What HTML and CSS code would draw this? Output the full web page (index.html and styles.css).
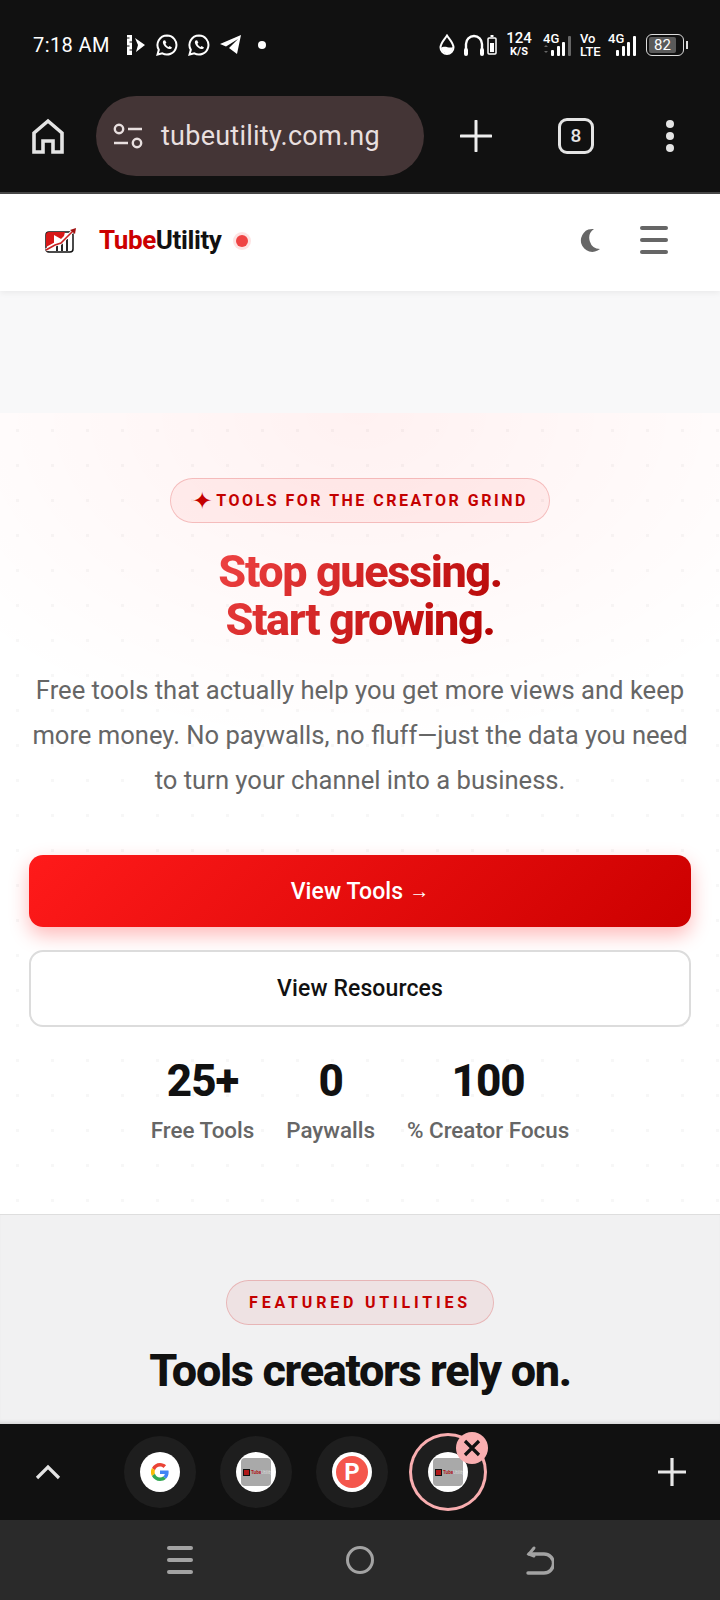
FILE: index.html
```html
<!DOCTYPE html>
<html>
<head>
    <title>TubeUtility</title>
    <link rel="stylesheet" href="styles.css">
</head>
<body>
    <div class="status-bar">
        <span class="clock">7:18 AM</span>
        <div class="status-icons">
            <svg width="20" height="22" viewBox="0 0 20 22"><path d="M1 1h5v20H1z" fill="#fff"/><path d="M1 4h2.500M3.500 8H6M1 12h2.500M3.500 16H6" stroke="#111" stroke-width="1.200"/><path d="M9 4l10 7-9 7 2-7z" fill="#fff"/></svg>
            <svg width="22" height="22" viewBox="0 0 22 22"><path d="M11 1.500a9.500 9.500 0 0 0-8.200 14.300L1.500 20.500l4.800-1.200A9.500 9.500 0 1 0 11 1.500z" fill="none" stroke="#fff" stroke-width="2"/><path d="M7.600 6.500c-1 1-1 2.600.2 4.400 1.300 2 3.200 3.600 5.200 4.100 1.400.3 2.600-.3 3-1.500l-2.400-1.500-1 1c-1.400-.6-2.600-1.800-3.200-3.200l1-1-1.300-2.500z" fill="#fff"/></svg>
            <svg width="22" height="22" viewBox="0 0 22 22"><path d="M11 1.500a9.500 9.500 0 0 0-8.200 14.300L1.500 20.500l4.800-1.200A9.500 9.500 0 1 0 11 1.500z" fill="none" stroke="#fff" stroke-width="2"/><path d="M7.600 6.500c-1 1-1 2.600.2 4.400 1.300 2 3.200 3.600 5.200 4.100 1.400.3 2.600-.3 3-1.500l-2.400-1.500-1 1c-1.400-.6-2.600-1.800-3.200-3.200l1-1-1.300-2.500z" fill="#fff"/></svg>
            <svg width="22" height="20" viewBox="0 0 22 20"><path d="M21 0L0 9l6 2.500L18 4 9 13l8 6z" fill="#fff"/></svg>
            <span class="notif-dot"></span>
        </div>
        <div class="status-right">
            <svg class="drop" width="16" height="22" viewBox="0 0 16 22"><path d="M8 1.500C5 6 1.500 9 1.500 13.500a6.500 6.500 0 0 0 13 0C14.500 9 11 6 8 1.500z" fill="none" stroke="#fff" stroke-width="2"/><path d="M2 14c4-3 8 1 12-1a6 6 0 0 1-12 1z" fill="#fff"/></svg>
            <svg class="headphones" width="22" height="24" viewBox="0 0 22 24"><path d="M3 16V11a8 8 0 0 1 16 0v5" fill="none" stroke="#fff" stroke-width="2.400"/><rect x="1" y="15" width="4" height="8" rx="2" fill="#fff"/><rect x="17" y="15" width="4" height="8" rx="2" fill="#fff"/></svg>
            <svg class="tiny-batt" width="10" height="20" viewBox="0 0 10 20"><path d="M3.500 0h3v2h-3z" fill="#fff"/><rect x="1" y="3" width="8" height="16" rx="1" fill="none" stroke="#fff" stroke-width="1.500"/><rect x="3" y="8" width="4" height="9" fill="#fff"/></svg>
            <div class="speed"><span>124</span><span class="speed-unit">K/S</span></div>
            <div class="sim">
                <span class="sim-label">4G</span>
                <svg width="29" height="20" viewBox="0 0 29 20"><path d="M1 11l2-2 2 2zM1 15l2 2 2-2z" fill="#666"/><rect x="8" y="14" width="3" height="6" rx="1" fill="#fff"/><rect x="14" y="10" width="3" height="10" rx="1" fill="#fff"/><rect x="19" y="6" width="3" height="14" rx="1" fill="#fff"/><rect x="25" y="0" width="3" height="20" rx="1" fill="#666"/></svg>
            </div>
            <div class="volte"><span>Vo</span><span>LTE</span></div>
            <div class="sim">
                <span class="sim-label">4G</span>
                <svg width="22" height="20" viewBox="0 0 22 20"><rect x="1" y="14" width="3" height="6" rx="1" fill="#fff"/><rect x="7" y="10" width="3" height="10" rx="1" fill="#fff"/><rect x="12" y="6" width="3" height="14" rx="1" fill="#fff"/><rect x="18" y="0" width="3" height="20" rx="1" fill="#fff"/></svg>
            </div>
            <div class="battery"><span class="battery-fill">82</span></div>
            <span class="battery-tip"></span>
        </div>
    </div>

    <div class="toolbar">
        <svg width="32" height="36" viewBox="0 0 32 36"><path d="M2 34V15L16 3l14 12v19h-9V23h-10v11z" fill="none" stroke="#e4e4e4" stroke-width="3.600"/></svg>
        <div class="url-pill">
            <svg width="30" height="26" viewBox="0 0 30 26"><circle cx="6" cy="6" r="4.200" fill="none" stroke="#e8dfdf" stroke-width="2.400"/><path d="M15 6h14M1 20h14" stroke="#e8dfdf" stroke-width="2.400"/><circle cx="24" cy="20" r="4.200" fill="none" stroke="#e8dfdf" stroke-width="2.400"/></svg>
            <span class="url-text">tubeutility.com.ng</span>
        </div>
        <svg class="tb-plus" width="32" height="32" viewBox="0 0 32 32"><path d="M16 1v30M1 16h30" stroke="#eee" stroke-width="3" stroke-linecap="round"/></svg>
        <div class="tab-count">8</div>
        <div class="menu-dots"><span></span><span></span><span></span></div>
    </div>

    <div class="site-header">
        <svg class="logo" width="32" height="26" viewBox="0 0 32 26"><rect x="1" y="5" width="27" height="20" rx="3" fill="#fff" stroke="#111" stroke-width="1.500"/><path d="M4 5h16l-1 4-3 3-15 8V8a3 3 0 0 1 3-3z" fill="#d81818"/><path d="M9 8l8 4.500-8 4.500z" fill="#fff"/><path d="M12 24v-6M17 24v-9M22 24V12" stroke="#111" stroke-width="1.800"/><path d="M1 23l9-5 6-2 5-5 8-8" fill="none" stroke="#fff" stroke-width="3.200"/><path d="M1 23l9-5 6-2 5-5 8-8" fill="none" stroke="#c82020" stroke-width="1.600"/><path d="M25 3l6-2-1 6z" fill="#a01010"/></svg>
        <div class="brand"><span class="brand-red">Tube</span>Utility</div>
        <span class="live-dot"></span>
        <svg class="moon" width="20" height="24" viewBox="0 0 20 24"><path d="M14 1a11.500 11.500 0 1 0 6 20A11 11 0 0 1 14 1z" fill="#666"/></svg>
        <div class="burger"><span></span><span></span><span></span></div>
    </div>

    <div class="ad-gap"></div>

    <section class="hero">
        <div class="badge badge-hero"><span class="spark">✦</span> TOOLS FOR THE CREATOR GRIND</div>
        <h1 class="headline"><span class="gradient-text">Stop guessing.<br>Start growing.</span></h1>
        <p class="lead">Free tools that actually help you get more views and keep more money. No paywalls, no fluff—just the data you need to turn your channel into a business.</p>
        <a class="btn btn-primary">View Tools <span class="arrow">→</span></a>
        <a class="btn btn-outline">View Resources</a>
        <div class="stats">
            <div class="stat"><div class="stat-num">25+</div><div class="stat-label">Free Tools</div></div>
            <div class="stat"><div class="stat-num">0</div><div class="stat-label">Paywalls</div></div>
            <div class="stat"><div class="stat-num">100</div><div class="stat-label">% Creator Focus</div></div>
        </div>
    </section>

    <section class="featured">
        <div class="badge badge-featured">FEATURED UTILITIES</div>
        <h2 class="section-title">Tools creators rely on.</h2>
    </section>

    <div class="tab-strip">
        <svg class="chevron" width="26" height="16" viewBox="0 0 26 16"><path d="M2 14L13 3l11 11" fill="none" stroke="#e4e4e4" stroke-width="3.200"/></svg>
        <div class="chips">
            <div class="chip"><div class="chip-inner">
                <svg width="18" height="18" viewBox="0 0 48 48"><path fill="#ea4335" d="M24 9.500c3.500 0 6.700 1.200 9.200 3.600l6.900-6.900C35.900 2.400 30.500 0 24 0 14.600 0 6.500 5.400 2.600 13.200l8 6.200C12.400 13.700 17.700 9.500 24 9.500z"/><path fill="#4285f4" d="M47 24.500c0-1.600-.1-3.100-.4-4.500H24v9h12.900c-.6 3-2.200 5.400-4.700 7.100l7.700 6C44.400 37.900 47 31.700 47 24.500z"/><path fill="#fbbc05" d="M10.500 28.600a14.500 14.500 0 0 1 0-9.200l-8-6.200a24 24 0 0 0 0 21.600z"/><path fill="#34a853" d="M24 48c6.500 0 11.900-2.100 15.900-5.900l-7.700-6c-2.200 1.500-4.900 2.300-8.200 2.300-6.300 0-11.600-4.200-13.500-9.900l-8 6.200C6.500 42.600 14.600 48 24 48z"/></svg>
            </div></div>
            <div class="chip"><div class="chip-inner"><div class="fav-tile"><i class="fav-mark"></i><span class="fav-text"><b>Tube</b>Utility</span></div></div></div>
            <div class="chip"><div class="chip-inner"><div class="fav-p">P</div></div></div>
            <div class="chip chip-active">
                <div class="chip-inner"><div class="fav-tile"><i class="fav-mark"></i><span class="fav-text"><b>Tube</b>Utility</span></div></div>
                <div class="chip-close"><svg width="18" height="18" viewBox="0 0 18 18"><path d="M2 2l14 14M16 2L2 16" stroke="#111" stroke-width="3.200"/></svg></div>
            </div>
        </div>
        <svg class="strip-plus" width="28" height="28" viewBox="0 0 28 28"><path d="M14 0v28M0 14h28" stroke="#e8e8e8" stroke-width="3.200"/></svg>
    </div>

    <div class="nav-bar">
        <div class="nav-menu"><span></span><span></span><span></span></div>
        <span class="nav-home"></span>
        <svg width="28" height="30" viewBox="0 0 28 30"><path d="M2 28h16a8 8 0 0 0 0-19H3" fill="none" stroke="#a3a3a3" stroke-width="3.400" stroke-linecap="round"/><path d="M8 3L3 9l5 2" fill="none" stroke="#a3a3a3" stroke-width="3" stroke-linecap="round"/></svg>
    </div>
</body>
</html>
```
FILE: styles.css
```css
* {
    box-sizing: border-box;
}
html, body {
    margin: 0;
    padding: 0;
}
body {
    width: 720px;
    height: 1600px;
    overflow: hidden;
    display: flex;
    flex-direction: column;
    font-family: Roboto, "Noto Sans", sans-serif;
    background: #111;
}

/* phone status bar */
.status-bar {
    height: 88px;
    flex: none;
    background: #111;
    color: #fff;
    display: flex;
    align-items: center;
    padding: 2px 32px 0 33px;
}
.clock {
    font-size: 20px;
    letter-spacing: 0.4px;
    width: 93px;
}
.status-icons {
    display: flex;
    align-items: center;
    gap: 10px;
}
.notif-dot {
    width: 8px;
    height: 8px;
    border-radius: 50%;
    background: #fff;
    margin-left: 6px;
}
.status-right {
    margin-left: auto;
    display: flex;
    align-items: center;
}
.headphones {
    margin-left: 8px;
}
.tiny-batt {
    margin-left: 2px;
}
.speed {
    width: 24px;
    display: flex;
    flex-direction: column;
    align-items: center;
    font-size: 15px;
    font-weight: 500;
    line-height: 13px;
    margin: 0 12px 0 10px;
}
.speed-unit {
    font-size: 11px;
    font-weight: 700;
}
.sim {
    position: relative;
    height: 22px;
    width: 29px;
}
.sim svg {
    position: absolute;
    right: 0;
    bottom: 0;
}
.sim-label {
    position: absolute;
    left: 0;
    top: -3px;
    font-size: 13px;
    font-weight: 500;
}
.volte {
    width: 20px;
    display: flex;
    flex-direction: column;
    font-size: 13px;
    font-weight: 500;
    line-height: 13px;
    margin: 0 8px;
}
.battery {
    width: 38px;
    height: 22px;
    margin-left: 9px;
    border: 1.5px solid #ddd;
    border-radius: 6px;
    padding: 2px;
    display: flex;
}
.battery-fill {
    width: 27px;
    background: #5a5a5a;
    border-radius: 2px;
    font-size: 15px;
    line-height: 16px;
    text-align: center;
}
.battery-tip {
    width: 2px;
    height: 8px;
    background: #ddd;
    margin-left: 2px;
}

/* browser toolbar */
.toolbar {
    height: 106px;
    flex: none;
    background: #111;
    border-bottom: 2px solid #484848;
    display: flex;
    align-items: center;
    padding: 0 0 8px 32px;
}
.url-pill {
    width: 328px;
    height: 80px;
    margin-left: 32px;
    border-radius: 40px;
    background: #443536;
    display: flex;
    align-items: center;
    padding-left: 17px;
}
.url-text {
    margin-left: 18px;
    color: #e8dfdf;
    font-size: 27px;
    letter-spacing: 0.25px;
}
.tb-plus {
    margin-left: 36px;
}
.tab-count {
    width: 36px;
    height: 36px;
    margin-left: 66px;
    border: 3px solid #e4e4e4;
    border-radius: 9px;
    color: #e4e4e4;
    font-size: 19px;
    font-weight: 500;
    line-height: 30px;
    text-align: center;
}
.menu-dots {
    margin-left: 72px;
    display: flex;
    flex-direction: column;
    gap: 4px;
}
.menu-dots span {
    width: 8px;
    height: 8px;
    border-radius: 50%;
    background: #e4e4e4;
}

/* site header */
.site-header {
    height: 97px;
    flex: none;
    background: #fff;
    display: flex;
    align-items: center;
    padding: 0 52px 5px 45px;
    box-shadow: 0 2px 6px rgba(0, 0, 0, 0.06);
    position: relative;
}
.brand {
    margin-left: 22px;
    font-size: 26px;
    font-weight: 700;
    letter-spacing: -0.4px;
    color: #111;
}
.brand-red {
    color: #cc0000;
}
.live-dot {
    width: 12px;
    height: 12px;
    margin: 2px 0 0 15px;
    border-radius: 50%;
    background: #ef4444;
    box-shadow: 0 0 0 3px rgba(239, 68, 68, 0.15);
}
.moon {
    margin-left: auto;
}
.burger {
    margin-left: 40px;
    display: flex;
    flex-direction: column;
    gap: 8px;
}
.burger span {
    width: 28px;
    height: 4px;
    border-radius: 2px;
    background: #666;
}

.ad-gap {
    height: 122px;
    flex: none;
    background: #f8f8f9;
}

/* hero */
.hero {
    height: 802px;
    flex: none;
    padding: 65px 29px 0;
    display: flex;
    flex-direction: column;
    align-items: center;
    background-color: #fff;
    background-image:
        radial-gradient(circle, rgba(0, 0, 0, 0.03) 1.5px, transparent 2px),
        radial-gradient(ellipse 70% 42% at 50% 0, rgba(255, 0, 0, 0.055), rgba(255, 0, 0, 0));
    background-size: 35px 35px, 100% 100%;
    border-bottom: 1px solid #dedede;
}
.badge {
    height: 45px;
    flex: none;
    border-radius: 23px;
    display: flex;
    align-items: center;
    justify-content: center;
    color: #c40000;
    font-size: 16px;
    font-weight: 700;
    border: 1px solid rgba(204, 0, 0, 0.2);
}
.badge-hero {
    width: 380px;
    letter-spacing: 2.5px;
    background: rgba(255, 0, 0, 0.05);
}
.spark {
    font-family: "DejaVu Sans", sans-serif;
    font-size: 24px;
    line-height: 24px;
    letter-spacing: 0;
    margin-right: 4px;
}
.headline {
    margin: 25px 0 0;
    font-size: 45px;
    font-weight: 800;
    line-height: 48px;
    letter-spacing: -1.4px;
    text-align: center;
}
.gradient-text {
    display: inline-block;
    background: linear-gradient(135deg, #ef4444, #b00000);
    -webkit-background-clip: text;
    background-clip: text;
    color: transparent;
}
.lead {
    margin: 24px 0 0;
    width: 662px;
    color: #666;
    font-size: 25.6px;
    line-height: 45px;
    text-align: center;
}
.btn {
    align-self: stretch;
    flex: none;
    display: flex;
    align-items: center;
    justify-content: center;
    border-radius: 14px;
    font-size: 23px;
    font-weight: 500;
    letter-spacing: 0.1px;
}
.btn-primary {
    height: 72px;
    margin-top: 52px;
    color: #fff;
    background: linear-gradient(135deg, #ff1a1a, #cc0000);
    box-shadow: 0 8px 20px rgba(255, 0, 0, 0.28);
}
.arrow {
    margin-left: 6px;
    font-size: 20px;
}
.btn-outline {
    height: 77px;
    margin-top: 23px;
    color: #111;
    background: #fff;
    border: 2px solid #dcdcdc;
}
.stats {
    display: flex;
    gap: 32px;
    margin-top: 26px;
    text-align: center;
}
.stat-num {
    color: #111;
    font-size: 44px;
    font-weight: 800;
    letter-spacing: -1px;
    line-height: 56px;
}
.stat-label {
    margin-top: 3px;
    color: #666;
    font-size: 22.4px;
    font-weight: 500;
    line-height: 36px;
}

/* next section, cut off by the tab strip */
.featured {
    flex: 1;
    min-height: 0;
    overflow: hidden;
    background: #f1f1f2;
    display: flex;
    flex-direction: column;
    align-items: center;
    padding-top: 65px;
    box-shadow: inset 0 -4px 4px -3px rgba(0, 0, 0, 0.15);
}
.badge-featured {
    width: 268px;
    letter-spacing: 3.8px;
    background: rgba(204, 0, 0, 0.06);
}
.section-title {
    margin: 21px 0 0;
    color: #111;
    font-size: 45px;
    font-weight: 800;
    line-height: 50px;
    letter-spacing: -1.3px;
    white-space: nowrap;
}

/* tab strip */
.tab-strip {
    height: 96px;
    flex: none;
    background: #111;
    display: flex;
    align-items: center;
    padding: 0 34px 0 35px;
}
.chips {
    display: flex;
    gap: 24px;
    margin-left: 63px;
}
.chip {
    position: relative;
    width: 72px;
    height: 72px;
    border-radius: 50%;
    background: #1e1e1e;
    display: flex;
    align-items: center;
    justify-content: center;
}
.chip-inner {
    width: 40px;
    height: 40px;
    border-radius: 50%;
    background: #fff;
    display: flex;
    align-items: center;
    justify-content: center;
}
.fav-tile {
    width: 30px;
    height: 28px;
    border-radius: 4px;
    background: #a9a9a9;
    display: flex;
    align-items: center;
    gap: 1px;
    overflow: hidden;
    padding-left: 2px;
}
.fav-mark {
    width: 7px;
    height: 7px;
    flex: none;
    background: #b01818;
    border: 1px solid #111;
}
.fav-text {
    font-size: 4.5px;
    color: #ddd;
    white-space: nowrap;
}
.fav-text b {
    color: #b01818;
}
.fav-p {
    width: 32px;
    height: 32px;
    border-radius: 50%;
    background: #f4564c;
    color: #fff;
    font-size: 24px;
    font-weight: 700;
    line-height: 32px;
    text-align: center;
}
.chip-active {
    box-shadow: 0 0 0 3px #f9aeb0;
}
.chip-close {
    position: absolute;
    top: -4px;
    right: -4px;
    width: 32px;
    height: 32px;
    border-radius: 50%;
    background: #f9aeb0;
    display: flex;
    align-items: center;
    justify-content: center;
}
.strip-plus {
    margin-left: auto;
}

/* android nav bar */
.nav-bar {
    height: 80px;
    flex: none;
    background: #2a2a2a;
    display: flex;
    align-items: center;
    padding: 0 166px 0 167px;
    justify-content: space-between;
}
.nav-menu {
    display: flex;
    flex-direction: column;
    gap: 8px;
}
.nav-menu span {
    width: 26px;
    height: 4px;
    border-radius: 2px;
    background: #a3a3a3;
}
.nav-home {
    width: 28px;
    height: 28px;
    border: 3.5px solid #a3a3a3;
    border-radius: 50%;
}
```
